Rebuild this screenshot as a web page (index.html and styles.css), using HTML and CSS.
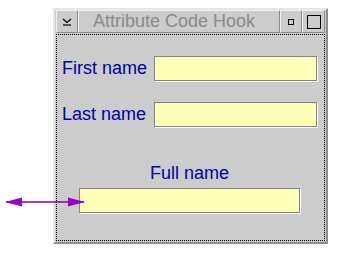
FILE: index.html
```html
<!DOCTYPE html>
<html lang="en">
<head>
    <meta charset="UTF-8">
    <title>Attribute Code Hook</title>
    <link rel="stylesheet" href="styles.css">
</head>
<body>
    <!-- Motif-style dialog window -->
    <div class="window">
        <div class="titlebar">
            <div class="tb-btn tb-menu">
                <svg width="10" height="8" viewBox="0 0 10 8"><path d="M1 1 L5 4.5 L9 1" fill="none" stroke="#000" stroke-width="1.2"/><path d="M1 7 H9" stroke="#000" stroke-width="1.2"/></svg>
            </div>
            <div class="tb-title">Attribute Code Hook</div>
            <div class="tb-btn tb-min"><span class="min-box"></span></div>
            <div class="tb-btn tb-max"><span class="max-box"></span></div>
        </div>

        <div class="content">
            <div class="form-row">
                <span class="label">First name</span>
                <div class="field field-short"></div>
            </div>
            <div class="form-row">
                <span class="label">Last name</span>
                <div class="field field-short"></div>
            </div>
            <div class="full">
                <span class="label">Full name</span>
                <div class="field field-long"></div>
            </div>
        </div>
    </div>

    <!-- link arrow that runs over the window edge -->
    <svg class="link-arrow" width="92" height="16" viewBox="0 0 92 16">
        <line x1="6" y1="8" x2="84" y2="8" stroke="#8800aa" stroke-width="1.5"/>
        <polygon points="5,8 22,3.5 22,12.5" fill="#9a00cc"/>
        <polygon points="85,8 68,3.5 68,12.5" fill="#9a00cc"/>
    </svg>
</body>
</html>
```

FILE: styles.css
```css
body {
    margin: 0;
    padding: 0;
    background: #fff;
    font-family: "Liberation Sans", Arial, sans-serif;
    position: relative;
}

/* window frame */
.window {
    margin: 8px 0 0 53px;
    width: 275px;
    height: 236px;
    box-sizing: border-box;
    background: #cccccc;
    border: 2px solid;
    border-color: #e6e6e6 #8c8c8c #8c8c8c #e6e6e6;
    display: flex;
    flex-direction: column;
}

.titlebar {
    display: flex;
    height: 23px;
    margin: 0 1px;
}

.tb-btn,
.tb-title {
    box-sizing: border-box;
    border: 1px solid;
    border-color: #f0f0f0 #8c8c8c #8c8c8c #f0f0f0;
    display: flex;
    align-items: center;
    justify-content: center;
}

.tb-menu {
    width: 22px;
}

.tb-title {
    flex: 1;
    color: #8a8a8a;
    font-size: 18px;
    padding-right: 10px;
    white-space: nowrap;
}

.tb-min {
    width: 22px;
}

.tb-max {
    width: 23px;
}

.min-box {
    width: 4px;
    height: 4px;
    border: 1px solid #000;
}

.max-box {
    width: 12px;
    height: 12px;
    border: 1.5px solid #000;
}

/* dotted client area */
.content {
    flex: 1;
    margin: 1px 1px 1px 1px;
    border: 1px dotted #000;
    padding: 21px 0 0 5px;
    display: flex;
    flex-direction: column;
}

.form-row {
    display: flex;
    align-items: center;
    gap: 6px;
    height: 25px;
    margin-bottom: 21px;
}

.label {
    color: #0000a8;
    font-size: 18px;
    width: 86px;
    white-space: nowrap;
}

.field {
    box-sizing: border-box;
    height: 25px;
    border: 1px solid #858585;
    box-shadow: 1px 1px 0 #fff;
    background-color: #ffffb0;
    background-image: linear-gradient(45deg, rgba(255, 255, 255, 0.45) 25%, transparent 25%, transparent 75%, rgba(255, 255, 255, 0.45) 75%);
    background-size: 2px 2px;
}

.field-short {
    width: 163px;
}

.full {
    display: flex;
    flex-direction: column;
    align-items: center;
    width: 221px;
    margin: 15px 0 0 17px;
    gap: 4px;
}

.full .label {
    width: auto;
}

.field-long {
    width: 221px;
}

.link-arrow {
    position: absolute;
    left: 0;
    top: 194px;
}
```
